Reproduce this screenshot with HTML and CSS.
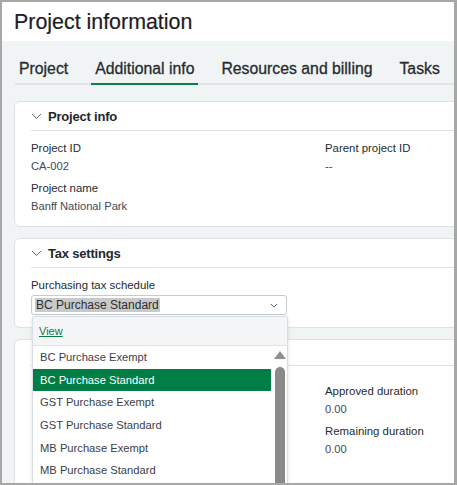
FILE: index.html
```html
<!DOCTYPE html>
<html>
<head>
<meta charset="utf-8">
<link rel="stylesheet" href="styles.css">
</head>
<body>
<div class="frame">
  <header class="header"><h1 class="title">Project information</h1></header>
  <nav class="tabs">
    <span class="tab">Project</span>
    <span class="tab active">Additional info</span>
    <span class="tab">Resources and billing</span>
    <span class="tab">Tasks</span>
  </nav>
  <div class="content">
    <section class="card card-project">
      <div class="card-head">
        <svg class="chev" viewBox="0 0 12 8" width="11" height="7"><path d="M1 1.2 L6 6.2 L11 1.2" fill="none" stroke="#555" stroke-width="1.1"/></svg>
        <span class="card-title">Project info</span>
      </div>
      <div class="fields">
        <div class="field"><div class="label">Project ID</div><div class="value">CA-002</div></div>
        <div class="field"><div class="label">Parent project ID</div><div class="value">--</div></div>
        <div class="field"><div class="label">Project name</div><div class="value">Banff National Park</div></div>
      </div>
    </section>
    <section class="card card-tax">
      <div class="card-head">
        <svg class="chev" viewBox="0 0 12 8" width="11" height="7"><path d="M1 1.2 L6 6.2 L11 1.2" fill="none" stroke="#555" stroke-width="1.1"/></svg>
        <span class="card-title">Tax settings</span>
      </div>
      <div class="label">Purchasing tax schedule</div>
      <div class="select">
        <span class="sel-text">BC Purchase Standard</span>
        <svg class="sel-chev" viewBox="0 0 10 6" width="8" height="5"><path d="M1 1 L5 5 L9 1" fill="none" stroke="#555" stroke-width="1.2"/></svg>
      </div>
    </section>
    <section class="card card-res">
      <div class="card-head empty"></div>
      <div class="fields">
        <div class="field"></div>
        <div class="field"><div class="label">Approved duration</div><div class="value">0.00</div></div>
        <div class="field"></div>
        <div class="field"><div class="label">Remaining duration</div><div class="value">0.00</div></div>
      </div>
    </section>
  </div>
  <div class="dropdown">
    <div class="dd-view"><a class="view-link">View</a></div>
    <div class="dd-body">
      <ul class="dd-list">
        <li>BC Purchase Exempt</li>
        <li class="selected">BC Purchase Standard</li>
        <li>GST Purchase Exempt</li>
        <li>GST Purchase Standard</li>
        <li>MB Purchase Exempt</li>
        <li>MB Purchase Standard</li>
      </ul>
      <div class="scrollbar">
        <div class="sb-arrow"></div>
        <div class="sb-thumb"></div>
      </div>
    </div>
  </div>
</div>
</body>
</html>
```

FILE: styles.css
```css
html, body {
  margin: 0;
  padding: 0;
}
body {
  font-family: "Liberation Sans", Arial, sans-serif;
  color: #23282d;
}
.frame {
  position: relative;
  width: 452px;
  height: 481px;
  border: 2px solid #a7a7a7;
  border-right-width: 3px;
  background: #f1f4f5;
  overflow: hidden;
}
.header {
  background: #fff;
  height: 39px;
  box-sizing: border-box;
  padding: 2px 0 0 12px;
  display: flex;
  align-items: center;
}
.title {
  margin: 0;
  font-size: 21.4px;
  font-weight: normal;
  color: #1c2024;
  -webkit-text-stroke: 0.2px #1c2024;
}
.tabs {
  display: flex;
  gap: 19px;
  margin-left: 13px;
  padding-top: 19px;
  border-bottom: 2px solid #e1e5e8;
  white-space: nowrap;
}
.tab {
  font-size: 15.8px;
  color: #262b30;
  -webkit-text-stroke: 0.3px #262b30;
  padding: 0 4px 6px;
  border-bottom: 2px solid transparent;
  margin-bottom: -2px;
  line-height: 17px;
}
.tab.active {
  border-bottom-color: #0a7f48;
}
.content {
  padding: 16px 0 0 12px;
  display: flex;
  flex-direction: column;
  gap: 11px;
}
.card {
  width: 480px;
  background: #fff;
  border: 1px solid #dde2e6;
  border-radius: 6px;
  padding: 0 0 0 16px;
  box-sizing: border-box;
}
.card-head {
  display: flex;
  align-items: center;
  gap: 6px;
  height: 28px;
  border-bottom: 1px solid #dde2e6;
  margin-bottom: 8px;
}
.card-head.empty {
  height: 25px;
}
.chev {
  display: block;
  margin-top: 1px;
}
.card-title {
  font-size: 13px;
  font-weight: bold;
  letter-spacing: -0.2px;
  color: #23282d;
}
.fields {
  display: grid;
  grid-template-columns: 294px 1fr;
  row-gap: 4px;
}
.label {
  font-size: 11.4px;
  line-height: 18px;
  color: #262b30;
}
.value {
  font-size: 11.2px;
  line-height: 18px;
  color: #414b55;
}
.card-project {
  height: 126px;
}
.card-tax {
  height: 90px;
}
.card-tax .card-head {
  margin-bottom: 8px;
}
.card-res {
  height: 160px;
}
.card-res .card-head {
  margin-bottom: 16px;
}
.select {
  width: 256px;
  height: 20px;
  margin-top: 1px;
  box-sizing: border-box;
  border: 1px solid #c5ccd2;
  border-radius: 3px;
  display: flex;
  align-items: center;
  justify-content: space-between;
  padding: 0 8px 0 3px;
}
.sel-text {
  font-size: 12px;
  background: #c9c9c9;
  color: #2b3035;
  line-height: 14px;
  padding: 0 1px;
}
.dropdown {
  position: absolute;
  left: 30px;
  top: 314px;
  width: 254px;
  height: 180px;
  background: #fff;
  border: 1px solid #d9dee2;
  box-shadow: 0 1px 4px rgba(0,0,0,0.12);
  border-radius: 2px;
}
.dd-view {
  height: 28px;
  background: #f3f5f6;
  border-bottom: 1px solid #dfe3e6;
  display: flex;
  align-items: center;
  padding-left: 6px;
}
.view-link {
  font-size: 11px;
  color: #0e7a46;
  text-decoration: underline;
}
.dd-body {
  display: flex;
}
.dd-list {
  list-style: none;
  margin: 0;
  padding: 0;
  width: 238px;
}
.dd-list li {
  font-size: 11.2px;
  height: 22.7px;
  line-height: 22.7px;
  padding-left: 7px;
  color: #3a4149;
  white-space: nowrap;
}
.dd-list li.selected {
  background: #007e45;
  color: #fff;
}
.scrollbar {
  width: 11px;
  margin-left: 3px;
  display: flex;
  flex-direction: column;
  align-items: center;
  padding-top: 5px;
}
.sb-arrow {
  width: 0;
  height: 0;
  border-left: 6px solid transparent;
  border-right: 6px solid transparent;
  border-bottom: 8px solid #8f8f8f;
}
.sb-thumb {
  margin-top: 8px;
  width: 10px;
  height: 150px;
  background: #8a8a8a;
  border-radius: 5px 5px 0 0;
}
```
